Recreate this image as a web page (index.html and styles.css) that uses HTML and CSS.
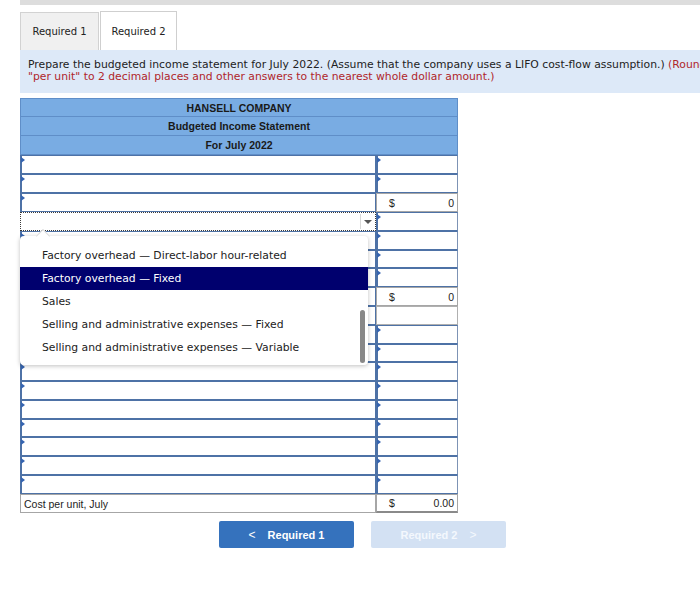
FILE: index.html
```html
<!DOCTYPE html>
<html>
<head>
<meta charset="utf-8">
<link rel="stylesheet" href="styles.css">
</head>
<body>
<div class="page">
  <div class="topbar"></div>
  <div class="tabs">
    <div class="tab">Required 1</div>
    <div class="tab active">Required 2</div>
  </div>
  <div class="instr">Prepare the budgeted income statement for July 2022. (Assume that the company uses a LIFO cost-flow assumption.) <span class="red">(Round<br>"per unit" to 2 decimal places and other answers to the nearest whole dollar amount.)</span></div>

  <div class="stmt">
    <div class="hrow">HANSELL COMPANY</div>
    <div class="hrow">Budgeted Income Statement</div>
    <div class="hrow">For July 2022</div>

    <div class="row"><div class="cell l inp"></div><div class="cell r inp"></div></div>
    <div class="row"><div class="cell l inp"></div><div class="cell r inp"></div></div>
    <div class="row"><div class="cell l inp"></div><div class="cell r money"><span>$</span><span>0</span></div></div>
    <div class="row"><div class="cell l sel"><span class="selarrow"></span></div><div class="cell r inp"></div></div>
    <div class="row"><div class="cell l inp"></div><div class="cell r inp"></div></div>
    <div class="row short"><div class="cell l inp"></div><div class="cell r inp"></div></div>
    <div class="row"><div class="cell l inp"></div><div class="cell r inp"></div></div>
    <div class="row"><div class="cell l inp"></div><div class="cell r money"><span>$</span><span>0</span></div></div>
    <div class="row"><div class="cell l inp"></div><div class="cell r plain"></div></div>
    <div class="row"><div class="cell l inp"></div><div class="cell r inp"></div></div>
    <div class="row short"><div class="cell l inp"></div><div class="cell r inp"></div></div>
    <div class="row"><div class="cell l inp"></div><div class="cell r inp"></div></div>
    <div class="row"><div class="cell l inp"></div><div class="cell r inp"></div></div>
    <div class="row"><div class="cell l inp"></div><div class="cell r inp"></div></div>
    <div class="row short"><div class="cell l inp"></div><div class="cell r inp"></div></div>
    <div class="row"><div class="cell l inp"></div><div class="cell r inp"></div></div>
    <div class="row"><div class="cell l inp"></div><div class="cell r inp"></div></div>
    <div class="row"><div class="cell l inp"></div><div class="cell r inp"></div></div>
    <div class="row"><div class="cell l label">Cost per unit, July</div><div class="cell r money total"><span>$</span><span>0.00</span></div></div>

    <div class="popup">
      <div class="item">Factory overhead — Direct-labor hour-related</div>
      <div class="item hl">Factory overhead — Fixed</div>
      <div class="item">Sales</div>
      <div class="item">Selling and administrative expenses — Fixed</div>
      <div class="item">Selling and administrative expenses — Variable</div>
      <div class="thumb"></div>
    </div>
  </div>

  <div class="buttons">
    <div class="btn prev"><span class="chev">&lt;</span>Required 1</div>
    <div class="btn next">Required 2<span class="chev">&gt;</span></div>
  </div>
</div>
</body>
</html>
```
FILE: styles.css
```css
html, body {
  margin: 0;
  padding: 0;
  background: #fff;
  overflow: hidden;
}
.page {
  width: 700px;
  height: 597px;
  overflow: hidden;
  font-family: "DejaVu Sans", Verdana, sans-serif;
  color: #222;
}
.topbar {
  margin-left: 20px;
  height: 5px;
  background: #dddddd;
}
.tabs {
  display: flex;
  margin-left: 20px;
  margin-top: 6px;
  height: 39px;
  align-items: flex-end;
}
.tab {
  box-sizing: border-box;
  height: 38px;
  width: 79px;
  border: 1px solid #d2d2d2;
  border-bottom: none;
  background: #f0f0f0;
  font-size: 10px;
  display: flex;
  align-items: center;
  justify-content: center;
  color: #222;
}
.tab.active {
  height: 39px;
  width: 77px;
  background: #fff;
  margin-left: 1px;
  border-color: #cfcfcf;
}
.instr {
  margin-left: 20px;
  width: 740px;
  box-sizing: border-box;
  height: 43px;
  background: #dde9f8;
  padding: 9px 0 0 8px;
  font-size: 10.8px;
  line-height: 12px;
  white-space: nowrap;
  color: #222;
}
.red {
  color: #b0262b;
}
.stmt {
  position: relative;
  margin-left: 20px;
  margin-top: 5px;
  width: 438px;
  font-family: "Liberation Sans", Arial, sans-serif;
  font-size: 10.5px;
}
.hrow {
  box-sizing: border-box;
  height: 19px;
  background: #79ace3;
  border: 1px solid #5f8ec8;
  border-top: none;
  text-align: center;
  font-weight: bold;
  line-height: 18px;
  color: #1a1a1a;
}
.hrow:first-child {
  border-top: 1px solid #5f8ec8;
}
.row {
  display: flex;
  height: 19px;
}
.row.short {
  height: 18px;
}
.cell {
  box-sizing: border-box;
  height: 100%;
  position: relative;
}
.cell.l {
  width: 356px;
}
.cell.r {
  width: 82px;
}
.inp {
  border: 1px solid #4e72a6;
  border-left-width: 2px;
  background: #fff;
}
.inp::before {
  content: "";
  position: absolute;
  left: -1px;
  top: 1px;
  border-left: 4px solid #3564b0;
  border-top: 3px solid transparent;
  border-bottom: 3px solid transparent;
}
.cell.r.inp {
  border-right-color: #7d93b5;
}
.money {
  border: 1px solid #a6a6a6;
  display: flex;
  justify-content: space-between;
  align-items: center;
  padding: 0 3px 0 12px;
  color: #222;
}
.money.total {
  border-bottom: 2px solid #8a8a8a;
}
.plain {
  border: 1px solid #b0b0b0;
}
.label {
  border: 1px solid #a6a6a6;
  padding-left: 3px;
  line-height: 18px;
  color: #222;
}
.sel {
  border: 1px dotted #3a3a3a;
  background: #fff;
}
.selarrow {
  position: absolute;
  right: 0;
  top: 1px;
  width: 14px;
  height: 15px;
  border-left: 1px solid #d8d8d8;
}
.selarrow::after {
  content: "";
  position: absolute;
  left: 3px;
  top: 6px;
  border-top: 4px solid #555;
  border-left: 4px solid transparent;
  border-right: 4px solid transparent;
}
.popup {
  position: absolute;
  left: 0;
  top: 138px;
  width: 348px;
  height: 129px;
  box-sizing: border-box;
  background: #fff;
  border-radius: 4px;
  box-shadow: 0 1px 4px rgba(0, 0, 0, 0.25);
  padding-top: 8px;
  font-family: "DejaVu Sans", Verdana, sans-serif;
  font-size: 10.8px;
  color: #222;
}
.popup::before {
  content: "";
  position: absolute;
  left: 18px;
  top: -5px;
  width: 9px;
  height: 9px;
  background: #fff;
  border-left: 1px solid #ddd;
  border-top: 1px solid #ddd;
  transform: rotate(45deg);
}
.item {
  height: 23px;
  line-height: 23px;
  padding-left: 22px;
  white-space: nowrap;
}
.item.hl {
  background: #00006e;
  color: #fff;
}
.thumb {
  position: absolute;
  right: 3px;
  top: 74px;
  width: 5px;
  height: 53px;
  border-radius: 3px;
  background: #888;
}
.buttons {
  display: flex;
  gap: 17px;
  margin-left: 219px;
  margin-top: 8px;
  font-family: "Liberation Sans", Arial, sans-serif;
}
.btn {
  width: 135px;
  height: 27px;
  border-radius: 2px;
  display: flex;
  align-items: center;
  justify-content: center;
  font-size: 11px;
  font-weight: bold;
  color: #fff;
}
.btn.prev {
  background: #3572bd;
}
.btn.next {
  background: #d3e1f3;
  color: #f4f8fd;
}
.prev .chev {
  margin-right: 12px;
  font-weight: normal;
  font-size: 12px;
}
.next .chev {
  margin-left: 12px;
  font-weight: normal;
  font-size: 12px;
}
```
